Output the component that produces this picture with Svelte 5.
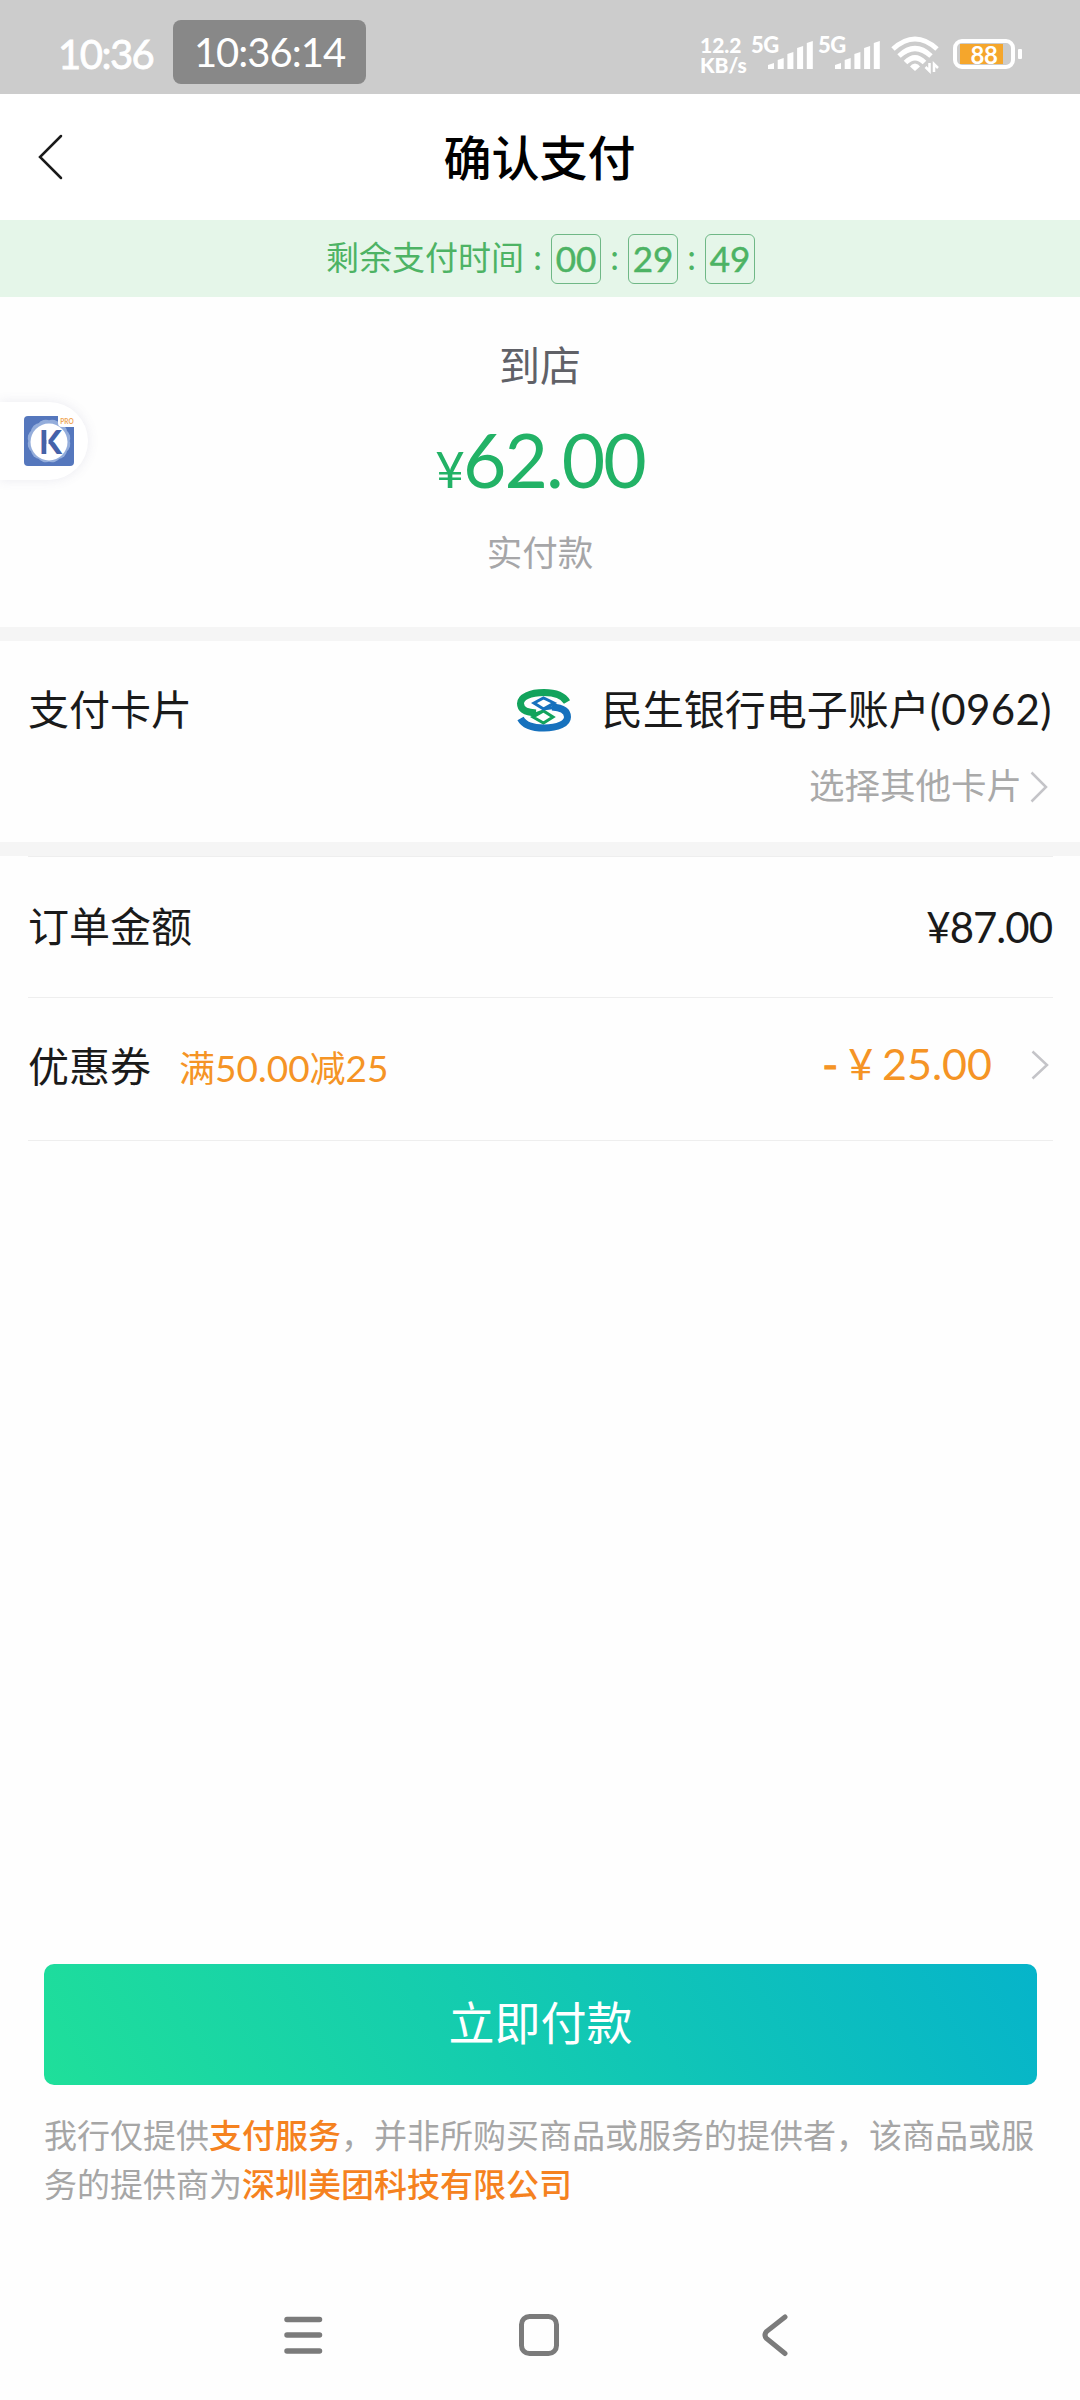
<script lang="ts">
  const timeLeft = ['00', '29', '49'];
  const signals = [0, 1];
  const bars = [6, 11, 17, 23, 28];
</script>

<div class="screen">
  <div class="status">
    <span class="clock">10:36</span>
    <span class="pill">10:36:14</span>
    <div class="indicators">
      <div class="speed"><span>12.2</span><span>KB/s</span></div>
      {#each signals as signal (signal)}
        <div class="signal">
          <span>5G</span>
          <svg width="46" height="30" viewBox="0 0 46 30">
            {#each bars as height, i}
              <path d="M{i * 9.7} {29 - height + 2}l6-2v{height}h-6z" fill="#fff" />
            {/each}
          </svg>
        </div>
      {/each}
      <svg class="wifi" width="48" height="38" viewBox="0 0 48 38" fill="none" stroke="#fff" stroke-width="5">
        <path d="M2 13Q24 -7 46 13" />
        <path d="M8 20Q24 5 40 20" />
        <path d="M14.500 26.500Q24 17 33.500 26.500" />
        <path d="M24 27.500a6 5 0 0 1 5 3l-5 4.500l-5-4.500a6 5 0 0 1 5-3z" fill="#fff" stroke="none" />
        <path d="M38.500 27v8l-4-4M43 36v-8l4 4" stroke-width="2.500" />
      </svg>
      <div class="battery">
        <div class="level"></div>
        <span>88</span>
      </div>
    </div>
  </div>

  <header>
    <svg class="back" width="26" height="46" viewBox="0 0 26 46" fill="none" stroke="#1a1a1a" stroke-width="2.500" stroke-linecap="round">
      <path d="M24 2L3 23L24 44" />
    </svg>
    <h1>确认支付</h1>
  </header>

  <div class="countdown">
    <span class="countdown-label">剩余支付时间</span>
    {#each timeLeft as part}
      <span class="colon">:</span>
      <span class="part">{part}</span>
    {/each}
  </div>

  <section class="summary">
    <div class="merchant">到店</div>
    <div class="amount"><small>¥</small>62.00</div>
    <div class="paid">实付款</div>
    <div class="floating">
      <svg width="50" height="50" viewBox="0 0 50 50">
        <rect width="50" height="50" rx="4" fill="#5577bd" />
        <g fill="#a9c0e6" opacity="0.75">
          <rect x="7" y="7" width="36" height="36" rx="9" />
          <rect x="7" y="7" width="36" height="36" rx="9" transform="rotate(30 25 25)" />
          <rect x="7" y="7" width="36" height="36" rx="9" transform="rotate(60 25 25)" />
        </g>
        <circle cx="25" cy="26" r="18.500" fill="#fff" />
        <path d="M34 0H50V11H38Q34 11 34 7Z" fill="#fff" />
        <text x="43" y="8" text-anchor="middle" font-size="6.500" font-weight="700" fill="#f0a657">PRO</text>
        <text x="15" y="38" font-size="33" font-weight="900" fill="#4562a9">K</text>
        <rect x="22.500" y="12" width="2" height="28" fill="#fff" />
      </svg>
    </div>
  </section>

  <section class="card">
    <div class="row">
      <span>支付卡片</span>
      <div class="bank">
        <svg width="56" height="43" viewBox="0 0 56 43" fill="none">
          <g stroke="#12a35c">
            <path d="M51 13C47 6 38 3.500 28 3.500C14 3.500 4.500 8 4.500 14.500C4.500 21 11 23.500 20 24" stroke-width="7" />
            <path d="M18 25.500L27.500 22L37 28L27.500 34L17 28L27.500 22" stroke-width="3" />
          </g>
          <g stroke="#1671bd">
            <path d="M4.500 29.500C8 36 17 39 28 39C42 39 51.500 34.500 51.500 28C51.500 21.500 45 18.500 36 18" stroke-width="7" />
            <path d="M38 18.500L27.500 20L18 14L27.500 9L38 14L27.500 20" stroke-width="3" />
          </g>
        </svg>
        <span>民生银行电子账户<span class="num">(0962)</span></span>
      </div>
    </div>
    <div class="other">
      <span>选择其他卡片</span>
      <svg width="18" height="32" viewBox="0 0 18 32" fill="none" stroke="#c4c4c8" stroke-width="2.500">
        <path d="M1.500 1.500L16 16L1.500 30.500" />
      </svg>
    </div>
  </section>

  <section class="order">
    <div class="line">
      <span>订单金额</span>
      <span class="num price">¥87.00</span>
    </div>
    <div class="line coupon">
      <span>优惠券</span>
      <span class="rule">满<span class="num">50.00</span>减<span class="num">25</span></span>
      <span class="num discount"><i class="minus">-</i><i>¥</i>25.00</span>
      <svg width="18" height="30" viewBox="0 0 18 30" fill="none" stroke="#c4c4c8" stroke-width="2.500">
        <path d="M1.500 1.500L16 15L1.500 28.500" />
      </svg>
    </div>
  </section>

  <footer>
    <button>立即付款</button>
    <p>
      我行仅提供<b>支付服务</b>，并非所购买商品或服务的提供者，该商品或服<br />务的提供商为<b>深圳美团科技有限公司</b>
    </p>
  </footer>

  <nav>
    <svg width="40" height="44" viewBox="0 0 40 44" fill="none" stroke="#7b7b7b" stroke-width="5.500" stroke-linecap="round">
      <path d="M4 6.500H36.500M4 22H36.500M4 38H36.500" />
    </svg>
    <svg width="42" height="44" viewBox="0 0 42 44" fill="none" stroke="#7b7b7b" stroke-width="5">
      <rect x="3.500" y="3.500" width="35" height="37" rx="8" />
    </svg>
    <svg width="28" height="44" viewBox="0 0 28 44" fill="none" stroke="#7b7b7b" stroke-width="5" stroke-linecap="round">
      <path d="M24 4L5.500 18.500Q2.500 22 5.500 25.500L24 40.500" />
    </svg>
  </nav>
</div>

<style>
  :global(body) {
    background: #fefefe;
  }

  .screen {
    width: 1080px;
    height: 2400px;
    display: flex;
    flex-direction: column;
    background: #fefefe;
    color: #1a1a1a;
    font-family: 'Noto Sans CJK SC', sans-serif;
    font-size: 41px;
    overflow: hidden;
  }

  .num,
  .clock,
  .pill,
  .part,
  .amount,
  .indicators {
    font-family: Lato, 'Noto Sans CJK SC', sans-serif;
  }

  .status {
    height: 94px;
    flex: none;
    display: flex;
    align-items: flex-start;
    background: #ccc;
    color: #fff;
  }

  .clock {
    width: 115px;
    margin: 30px 0 0 58px;
    font-size: 40px;
    line-height: 48px;
    letter-spacing: -1.5px;
    -webkit-text-stroke: 0.8px #fff;
  }

  .pill {
    width: 193px;
    height: 64px;
    margin-top: 20px;
    border-radius: 8px;
    background: #888;
    font-size: 40px;
    line-height: 65px;
    letter-spacing: -1px;
    text-align: center;
  }

  .indicators {
    display: flex;
    align-items: flex-start;
    margin: 35px 0 0 334px;
    font-size: 22px;
    font-weight: 900;
    line-height: 20px;
    letter-spacing: -0.5px;
  }

  .speed {
    width: 51px;
    display: flex;
    flex-direction: column;
    font-size: 21px;
    letter-spacing: 0;
  }

  .speed span {
    line-height: 19px;
  }

  .speed span + span {
    margin-top: 1px;
  }

  .signal {
    position: relative;
    width: 67px;
    height: 36px;
  }

  .signal svg {
    position: absolute;
    left: 17px;
    top: 5px;
  }

  .wifi {
    margin: 1px 14px 0 6px;
  }

  .battery {
    position: relative;
    width: 54px;
    height: 22px;
    margin-top: 4px;
    border: 4px solid #fff;
    border-radius: 9px;
    font-size: 24px;
    font-weight: 700;
    line-height: 23px;
    text-align: center;
  }

  .battery::after {
    content: '';
    position: absolute;
    right: -11px;
    top: 6px;
    width: 4px;
    height: 10px;
    border-radius: 1px;
    background: #fff;
  }

  .level {
    position: absolute;
    left: 3px;
    top: 1px;
    width: 43px;
    height: 20px;
    background: #f5a62c;
  }

  .battery span {
    position: relative;
  }

  header {
    height: 126px;
    flex: none;
    display: flex;
    align-items: center;
    background: #fff;
  }

  .back {
    margin-left: 37px;
  }

  h1 {
    flex: 1;
    margin: 0 64px 5px 0;
    color: #000;
    font-size: 48px;
    font-weight: 500;
    line-height: 60px;
    text-align: center;
  }

  .countdown {
    height: 77px;
    flex: none;
    display: flex;
    align-items: center;
    padding-left: 326px;
    background: #e5f6e9;
    color: #4db364;
    font-size: 33px;
  }

  .countdown-label {
    width: 198px;
    margin-bottom: 5px;
    line-height: 50px;
  }

  .colon {
    width: 27px;
    margin-bottom: 5px;
    line-height: 50px;
    text-align: center;
  }

  .part {
    width: 48px;
    height: 48px;
    border: 1px solid #6fb886;
    border-radius: 6px;
    font-size: 35px;
    line-height: 46px;
    text-align: center;
    -webkit-text-stroke: 0.5px #4db364;
  }

  .summary {
    position: relative;
    height: 330px;
    flex: none;
    border-bottom: 14px solid #f5f5f5;
    text-align: center;
  }

  .merchant {
    margin-top: 36px;
    color: #606167;
    font-size: 41px;
    line-height: 60px;
  }

  .amount {
    margin-top: 21px;
    color: #22b266;
    font-size: 75px;
    line-height: 90px;
    letter-spacing: -2px;
  }

  .amount small {
    font-size: 51px;
  }

  .paid {
    margin-top: 12px;
    color: #a6a6a8;
    font-size: 35.500px;
    line-height: 50px;
  }

  .floating {
    position: absolute;
    left: 0;
    top: 105px;
    width: 88px;
    height: 78px;
    display: flex;
    align-items: center;
    justify-content: center;
    padding-left: 10px;
    box-sizing: border-box;
    border-radius: 0 40px 40px 0;
    background: #fff;
    box-shadow: 0 0 12px rgba(90, 90, 140, 0.12);
    font-family: Lato, sans-serif;
  }

  .card {
    height: 201px;
    flex: none;
    border-bottom: 14px solid #f5f5f5;
  }

  .row {
    display: flex;
    justify-content: space-between;
    padding: 36px 28px 0;
    line-height: 60px;
  }

  .bank {
    display: flex;
    align-items: center;
    gap: 30px;
  }

  .bank svg {
    margin-top: 5px;
  }

  .bank .num {
    font-size: 42px;
    letter-spacing: 0.4px;
  }

  .other {
    display: flex;
    align-items: center;
    justify-content: flex-end;
    gap: 8px;
    margin-top: 18px;
    padding-right: 32px;
    color: #a9a9a9;
    font-size: 35.500px;
    line-height: 54px;
  }

  .other span {
    margin-bottom: 5px;
  }

  .order {
    flex: none;
    margin: 0 27px 0 28px;
    border-top: 1px solid #eee;
  }

  .line {
    height: 140px;
    display: flex;
    align-items: center;
    justify-content: space-between;
    border-bottom: 1px solid #eee;
    line-height: 60px;
  }

  .line > span:first-child {
    margin-bottom: 6px;
  }

  .price {
    margin-right: 1px;
    font-size: 42px;
    letter-spacing: -1px;
  }

  .coupon {
    height: 142px;
    color: #f59425;
  }

  .coupon > span:first-child {
    margin-bottom: 10px;
    color: #1a1a1a;
  }

  .rule {
    flex: 1;
    margin: 0 0 5px 28px;
    font-size: 36px;
  }

  .rule .num {
    font-size: 37px;
  }

  .discount {
    margin: 0 39px 11px 0;
    font-size: 43px;
  }

  .discount i {
    margin-right: 9px;
    font-style: normal;
  }

  .discount .minus {
    margin-right: 10px;
    -webkit-text-stroke: 1px #f59425;
  }

  .coupon svg {
    margin: 0 4px 9px 0;
  }

  footer {
    margin-top: auto;
    padding: 0 43px 0 44px;
  }

  button {
    display: block;
    width: 100%;
    height: 121px;
    padding: 0 0 9px;
    border: 0;
    border-radius: 10px;
    background: linear-gradient(60deg, #1fdf9a, #06b4ca);
    color: #fff;
    font-family: inherit;
    font-size: 46px;
  }

  p {
    margin: 25px 0 0;
    color: #a6a6a6;
    font-size: 33px;
    line-height: 49px;
    white-space: nowrap;
  }

  b {
    color: #f5821f;
    font-weight: 500;
  }

  nav {
    display: flex;
    justify-content: space-between;
    margin-top: 105px;
    padding: 0 291px 43px 283px;
  }

  nav svg:nth-child(2) {
    margin-right: 7px;
  }
</style>
